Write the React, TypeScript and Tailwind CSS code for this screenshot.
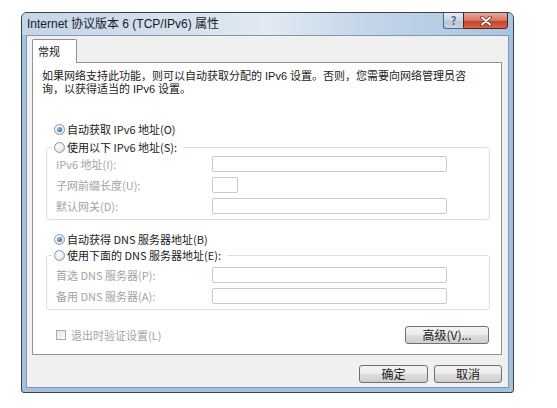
import React from 'react';

function Radio({ checked }: { checked?: boolean }) {
  return (
    <span className="w-[11px] h-[11px] shrink-0 rounded-full border border-[#8e959c] bg-[radial-gradient(circle_at_35%_35%,#ffffff,#d6dade)] flex items-center justify-center">
      {checked && <span className="w-[5px] h-[5px] rounded-full bg-[radial-gradient(circle_at_35%_35%,#8cc0ee,#1d5592)]" />}
    </span>
  );
}

function Field({ small }: { small?: boolean }) {
  return (
    <div
      className={
        small
          ? 'w-[26px] h-[16px] border border-[#c6c9cd] rounded-[2px] bg-white'
          : 'w-[235px] h-[16px] border border-[#c6c9cd] rounded-[2px] bg-white'
      }
    />
  );
}

function Row({ label, small }: { label: string; small?: boolean }) {
  return (
    <div className="h-[16px] flex items-center">
      <span className="w-[156px] text-[11px] leading-[16px] text-[#a3a3a3]">{label}</span>
      <Field small={small} />
    </div>
  );
}

function Btn({ label, w }: { label: string; w: string }) {
  return (
    <div
      className={`${w} h-[18px] rounded-[3px] border border-[#707070] bg-[linear-gradient(#f3f3f3_0%,#ebebeb_50%,#dddddd_51%,#cfcfcf_100%)] flex items-center justify-center text-[12px] leading-[16px] text-[#1a1a1a]`}
    >
      {label}
    </div>
  );
}

export default function App() {
  return (
    <div className="w-[557px] h-[408px] bg-white pt-[12px] pl-[21px] font-['Noto_Sans_CJK_SC',sans-serif]">
      {/* window frame */}
      <div className="w-[493px] h-[381px] rounded-t-[6px] rounded-b-[3px] border border-[#37424c] bg-[#a4c1df] flex flex-col overflow-hidden">
        {/* title bar */}
        <div className="h-[22px] flex items-start pl-[5px] pr-[5px] bg-[linear-gradient(90deg,#c3d5e8_0%,#d6e2ef_35%,#e2eaf3_50%,#c4d6e9_70%,#a9c4e0_100%)]">
          <span className="h-[22px] flex items-center text-[12px] text-[#1b1b1b] font-['Liberation_Sans','Noto_Sans_CJK_SC',sans-serif]">
            Internet 协议版本 6 (TCP/IPv6) 属性
          </span>
          <div className="ml-auto -mt-px flex">
            <div className="w-[20px] h-[17px] rounded-bl-[3px] border border-[#55677a] border-r-0 bg-[linear-gradient(#e3ebf3_0%,#c9d6e3_50%,#b4c5d6_51%,#c7d6e4_100%)] flex items-center justify-center text-[11px] font-bold leading-none text-[#5b6b7c]">
              ?
            </div>
            <div className="w-[45px] h-[17px] rounded-br-[3px] border border-[#5a2319] bg-[linear-gradient(#e9a99b_0%,#d87562_50%,#c4402a_51%,#d6624a_100%)] flex items-center justify-center">
              <svg width="14" height="10" viewBox="0 0 14 10">
                <path d="M3 1.5 L11 8.5 M11 1.5 L3 8.5" stroke="#6d2a1e" strokeWidth="3.6" strokeLinecap="round" />
                <path d="M3 1.5 L11 8.5 M11 1.5 L3 8.5" stroke="#ffffff" strokeWidth="2" strokeLinecap="round" />
              </svg>
            </div>
          </div>
        </div>

        {/* client area */}
        <div className="h-[353px] mx-[4px] border border-[#7f97b1] bg-[#f0f0f0] pl-[5px] pr-[6px] pt-[3px] flex flex-col">
          {/* tab header */}
          <div className="flex">
            <div className="relative z-10 -mb-px w-[45px] h-[24px] border border-b-0 border-[#8e929a] rounded-t-[2px] bg-white pl-[5px] pt-[3px] text-[11px] leading-[16px] text-[#1a1a1a]">
              常规
            </div>
          </div>

          {/* tab panel */}
          <div className="h-[293px] border border-[#8e929a] bg-white pl-[9px] pr-[11px] pt-[7px] flex flex-col text-[11px] text-[#1a1a1a]">
            <p className="leading-[13px] font-['Liberation_Sans','Noto_Sans_CJK_SC',sans-serif]">
              如果网络支持此功能，则可以自动获取分配的 IPv6 设置。否则，您需要向网络管理员咨
              <br />
              询，以获得适当的 IPv6 设置。
            </p>

            <div className="mt-[25px] ml-[12px] h-[16px] flex items-center gap-[2px] leading-[16px]">
              <Radio checked />
              <span>自动获取 IPv6 地址(O)</span>
            </div>

            <fieldset className="mt-[2px] ml-[4px] border border-[#dcdee2] rounded-[3px] pb-[5px]">
              <legend className="ml-[5px] pl-[2px] pr-[6px]">
                <div className="h-[16px] flex items-center gap-[2px] leading-[16px]">
                  <Radio />
                  <span>使用以下 IPv6 地址(S):</span>
                </div>
              </legend>
              <div className="mt-[1px] pl-[9px] flex flex-col gap-[5px]">
                <Row label="IPv6 地址(I):" />
                <Row label="子网前缀长度(U):" small />
                <Row label="默认网关(D):" />
              </div>
            </fieldset>

            <div className="mt-[11px] ml-[12px] h-[16px] flex items-center gap-[2px] leading-[16px]">
              <Radio checked />
              <span>自动获得 DNS 服务器地址(B)</span>
            </div>

            <fieldset className="ml-[4px] border border-[#dcdee2] rounded-[3px] pb-[5px]">
              <legend className="ml-[5px] pl-[2px] pr-[6px]">
                <div className="h-[16px] flex items-center gap-[2px] leading-[16px]">
                  <Radio />
                  <span>使用下面的 DNS 服务器地址(E):</span>
                </div>
              </legend>
              <div className="mt-[4px] pl-[9px] flex flex-col gap-[5px]">
                <Row label="首选 DNS 服务器(P):" />
                <Row label="备用 DNS 服务器(A):" />
              </div>
            </fieldset>

            <div className="mt-[16px] h-[18px] flex items-center">
              <span className="ml-[14px] w-[10px] h-[10px] border border-[#a6a9ad] bg-[linear-gradient(135deg,#e4e6e8,#fafafa)]" />
              <span className="ml-[5px] text-[#a3a3a3] leading-[16px]">退出时验证设置(L)</span>
              <div className="ml-auto mr-[1px]">
                <Btn label="高级(V)..." w="w-[84px]" />
              </div>
            </div>
          </div>

          {/* dialog buttons */}
          <div className="mt-[10px] flex justify-end gap-[6px]">
            <Btn label="确定" w="w-[69px]" />
            <Btn label="取消" w="w-[68px]" />
          </div>
        </div>
      </div>
    </div>
  );
}
